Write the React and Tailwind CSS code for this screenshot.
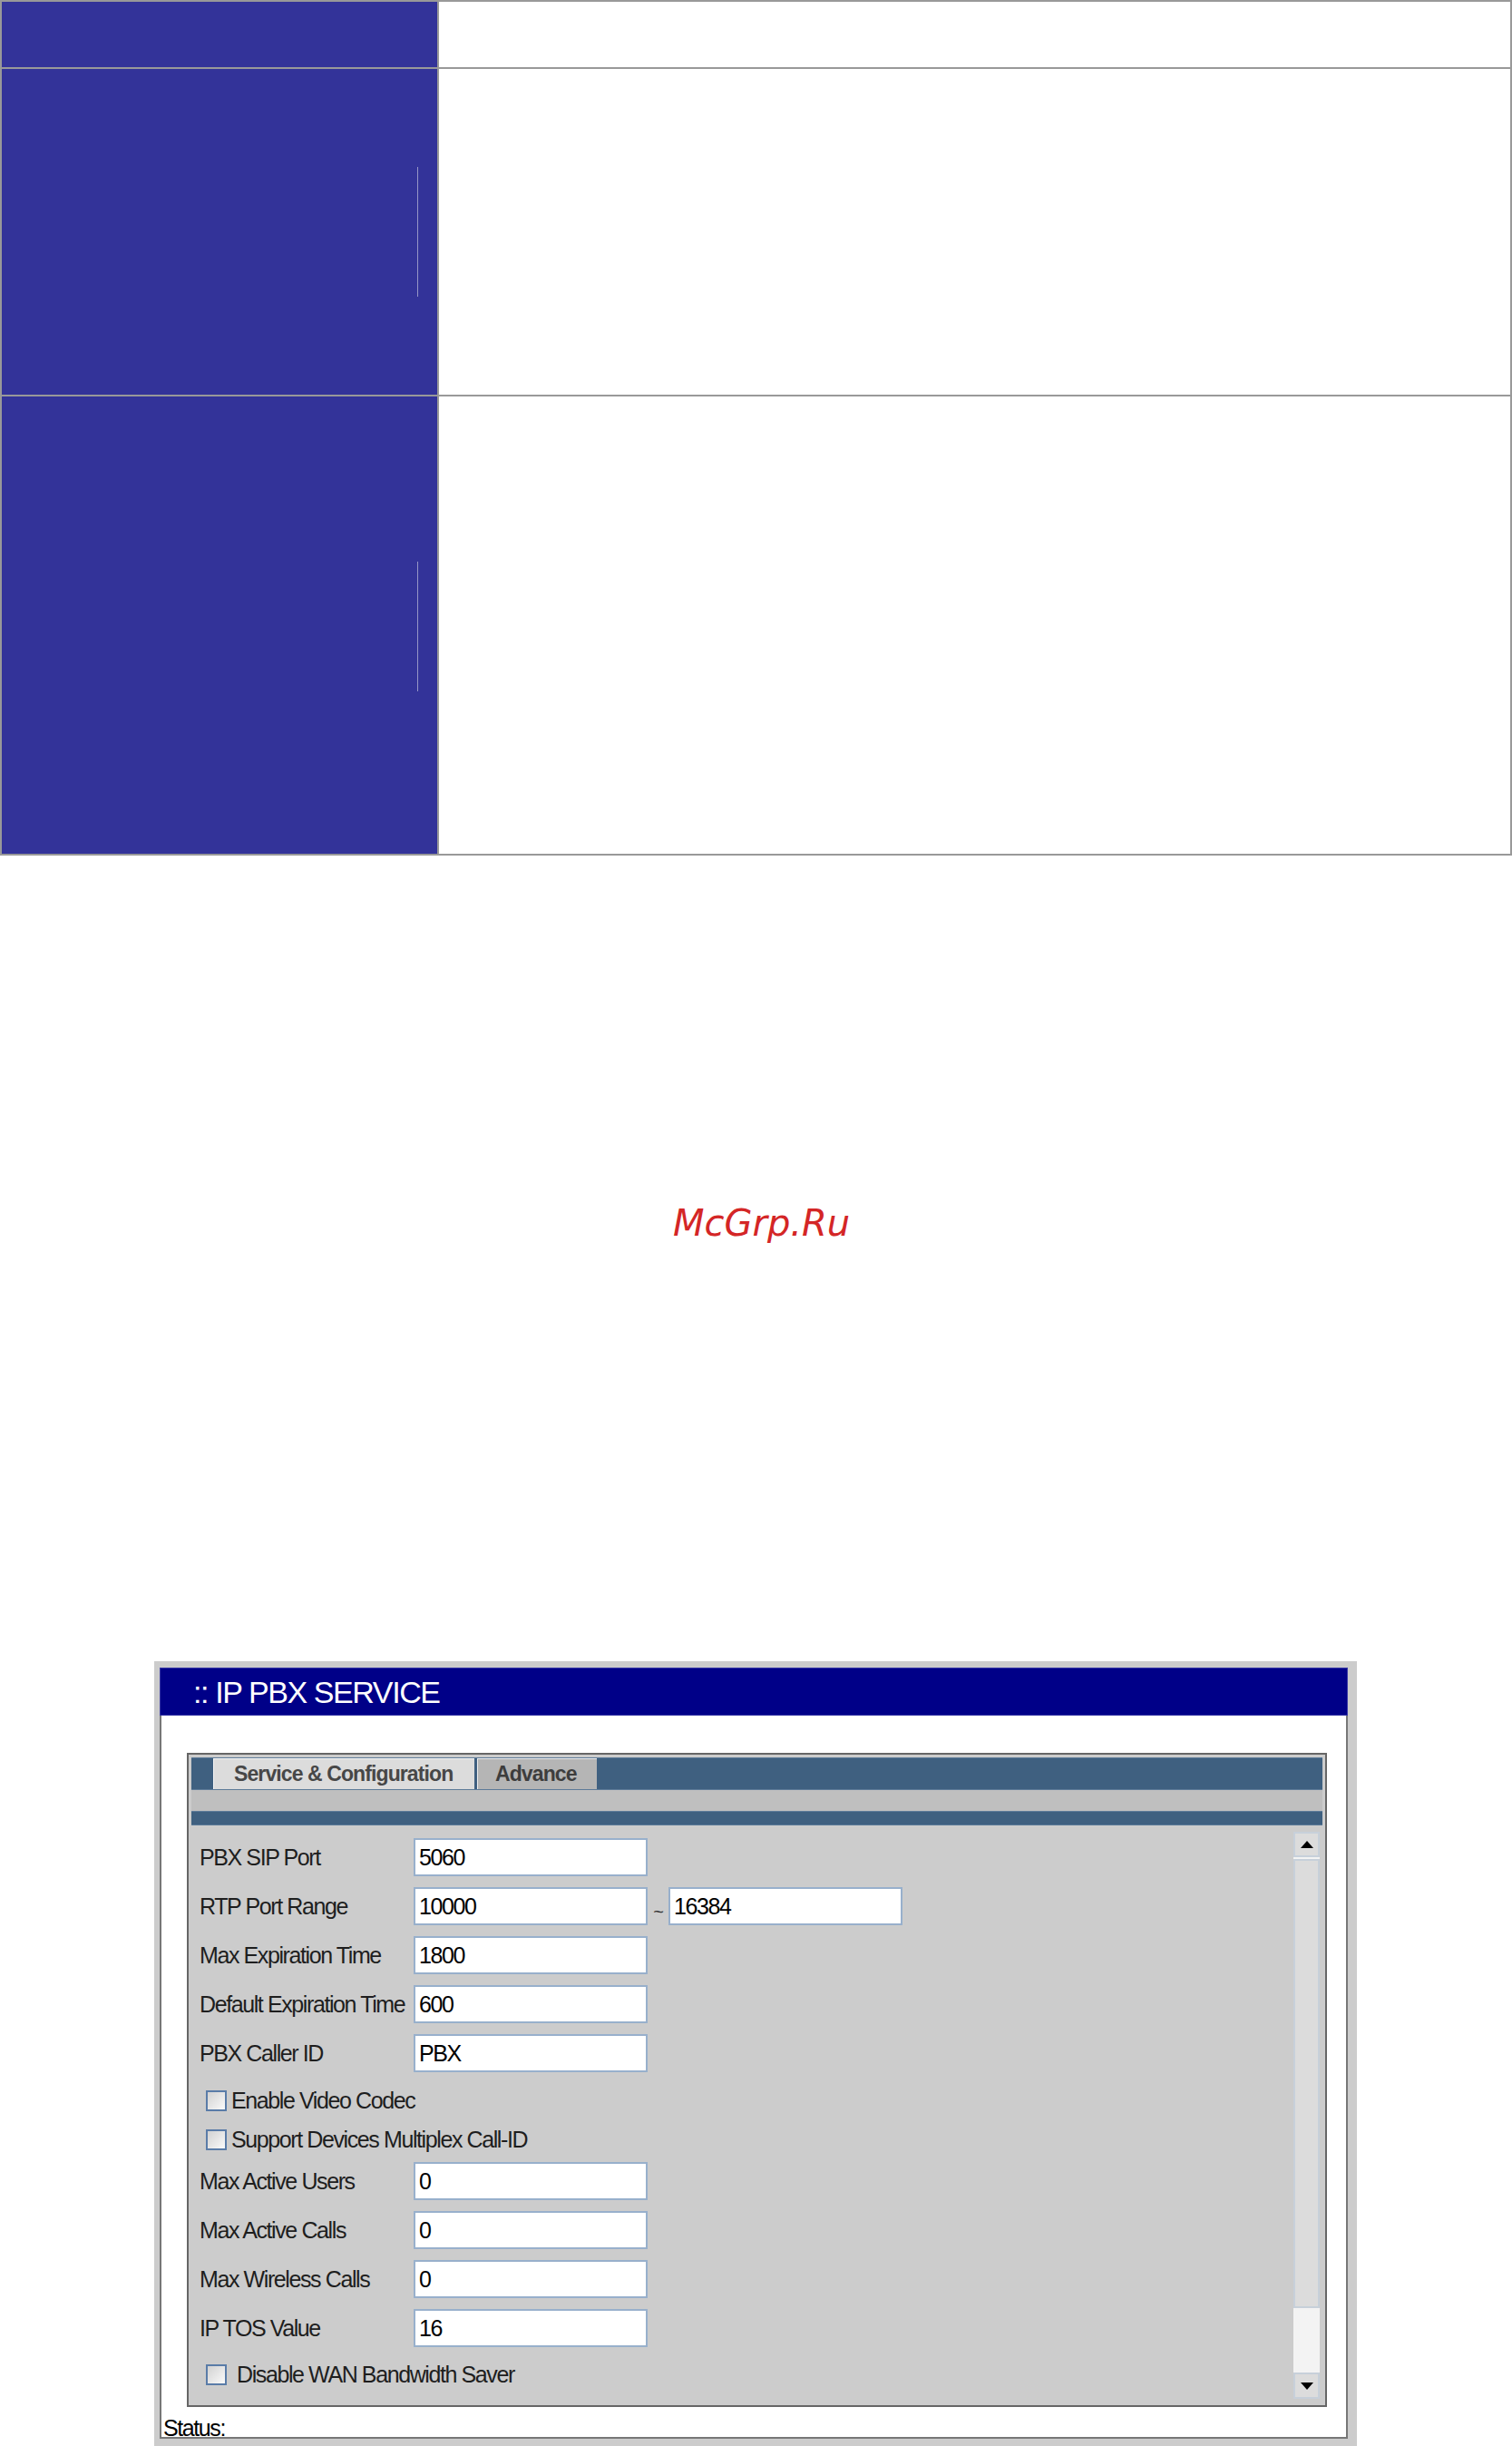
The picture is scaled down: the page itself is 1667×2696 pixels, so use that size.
import React from "react";

const Up = () => (
  <svg width="14" height="8" viewBox="0 0 14 8"><polygon points="0,8 7,0 14,8" fill="#000" /></svg>
);
const Down = () => (
  <svg width="14" height="8" viewBox="0 0 14 8"><polygon points="0,0 14,0 7,8" fill="#000" /></svg>
);

const Input = ({ value }) => (
  <div className="w-[258px] h-[42px] border-2 border-[#98b0cc] bg-white flex items-center pl-[4px] text-black leading-none">
    {value}
  </div>
);

const Row = ({ label, value, mb = "mb-[12px]", extra }) => (
  <div className={`flex items-center h-[42px] ${mb}`}>
    <div className="w-[236px] leading-none text-[#1e1e1e] whitespace-nowrap">{label}</div>
    <Input value={value} />
    {extra}
  </div>
);

const Check = ({ label, gap, mt }) => (
  <div className={`flex items-center h-[23px] ${mt}`}>
    <div className="ml-[7px] w-[23px] h-[23px] border-2 border-[#5a7ca8] bg-linear-to-br from-[#d2d2d2] to-[#fafafa]" />
    <div className={`${gap} leading-none text-[#1e1e1e] whitespace-nowrap`}>{label}</div>
  </div>
);

export default function App() {
  return (
    <div className="w-[1667px] h-[2696px] overflow-hidden bg-white font-['Liberation_Sans',Arial,sans-serif]">
      {/* top table */}
      <div className="w-[1667px] border-2 border-[#999999]">
        <div className="flex h-[74px] border-b-2 border-[#999999]">
          <div className="w-[482px] bg-[#333399] border-r-2 border-[#999999]" />
          <div className="flex-1 bg-white" />
        </div>
        <div className="flex h-[361px] border-b-2 border-[#999999]">
          <div className="w-[482px] bg-[#333399] border-r-2 border-[#999999] pt-[108px] pl-[458px]">
            <div className="w-px h-[143px] bg-[#9696c6]" />
          </div>
          <div className="flex-1 bg-white" />
        </div>
        <div className="flex h-[504px]">
          <div className="w-[482px] bg-[#333399] border-r-2 border-[#999999] pt-[182px] pl-[458px]">
            <div className="w-px h-[143px] bg-[#9696c6]" />
          </div>
          <div className="flex-1 bg-white" />
        </div>
      </div>

      {/* watermark */}
      <div className="mt-[385px] pl-[742px] h-[40px] leading-[40px] text-[40px] italic text-[#d42626] font-['DejaVu_Sans',sans-serif] whitespace-nowrap">
        McGrp.Ru
      </div>

      {/* IP PBX panel */}
      <div className="mt-[463px] ml-[170px] w-[1326px] h-[865px] bg-[#cccccc] pt-[7px] pl-[6px] pr-[10px]">
        <div className="h-[53px] bg-[#000088] border border-[#3a3aa6] flex items-center pl-[36px] text-white text-[34px] tracking-[-1.4px] leading-none whitespace-nowrap">
          :: IP PBX SERVICE
        </div>
        <div className="h-[797px] bg-white border-l-2 border-r-2 border-b-2 border-[#777777] pt-[41px] text-[25px] tracking-[-1.4px]">
          <div className="ml-[28px] w-[1257px] h-[721px] border-2 border-[#666666] bg-[#cccccc] p-[3px] flex flex-col">
            {/* tab bar */}
            <div className="h-[36px] bg-[#3f6080] border-y border-[#5c7a98] flex items-end pl-[24px]">
              <div className="h-[34px] w-[288px] bg-[#dcdcdc] border-t border-l border-[#f4f4f4] pl-[22px] flex items-center font-bold text-[23px] tracking-[-0.9px] text-[#474747] leading-none whitespace-nowrap">
                Service &amp; Configuration
              </div>
              <div className="ml-[3px] h-[34px] w-[132px] bg-[#b5b5b5] border-t border-l border-[#ececec] pl-[19px] flex items-center font-bold text-[23px] tracking-[-0.9px] text-[#3d3d3d] leading-none whitespace-nowrap">
                Advance
              </div>
            </div>
            <div className="h-[23px] bg-[#bfbfbf]" />
            <div className="h-[16px] bg-[#3f6080] border-y border-[#5c7a98]" />
            {/* content */}
            <div className="flex-1 flex">
              <div className="flex-1 pl-[9px] pt-[14px]">
                <Row label="PBX SIP Port" value="5060" />
                <Row
                  label="RTP Port Range"
                  value="10000"
                  extra={
                    <>
                      <div className="w-[23px] text-center text-[20px] pt-[12px] leading-none text-[#333]">~</div>
                      <Input value="16384" />
                    </>
                  }
                />
                <Row label="Max Expiration Time" value="1800" />
                <Row label="Default Expiration Time" value="600" />
                <Row label="PBX Caller ID" value="PBX" mb="mb-0" />
                <Check label="Enable Video Codec" gap="ml-[5px]" mt="mt-[20px]" />
                <Check label="Support Devices Multiplex Call-ID" gap="ml-[5px]" mt="mt-[20px]" />
                <div className="mt-[13px]">
                  <Row label="Max Active Users" value="0" />
                  <Row label="Max Active Calls" value="0" />
                  <Row label="Max Wireless Calls" value="0" />
                  <Row label="IP TOS Value" value="16" mb="mb-0" />
                </div>
                <Check label="Disable WAN Bandwidth Saver" gap="ml-[11px]" mt="mt-[19px]" />
              </div>
              {/* scrollbar */}
              <div className="w-[29px] mr-[3px] pt-[7px] pb-[4px] flex flex-col">
                <div className="h-[28px] bg-[#dcdcdc] border-2 border-[#c7d0da] flex items-center justify-center">
                  <Up />
                </div>
                <div className="flex-1 bg-[#f3f3f3] pt-[2px]">
                  <div className="h-[495px] bg-[#dcdcdc] border-2 border-[#c7d0da]" />
                </div>
                <div className="h-[29px] bg-[#dcdcdc] border-2 border-[#c7d0da] flex items-center justify-center">
                  <Down />
                </div>
              </div>
            </div>
          </div>
          <div className="h-[33px] pl-[2px] pt-[11px] leading-[25px] text-black whitespace-nowrap">Status:</div>
        </div>
      </div>
    </div>
  );
}
